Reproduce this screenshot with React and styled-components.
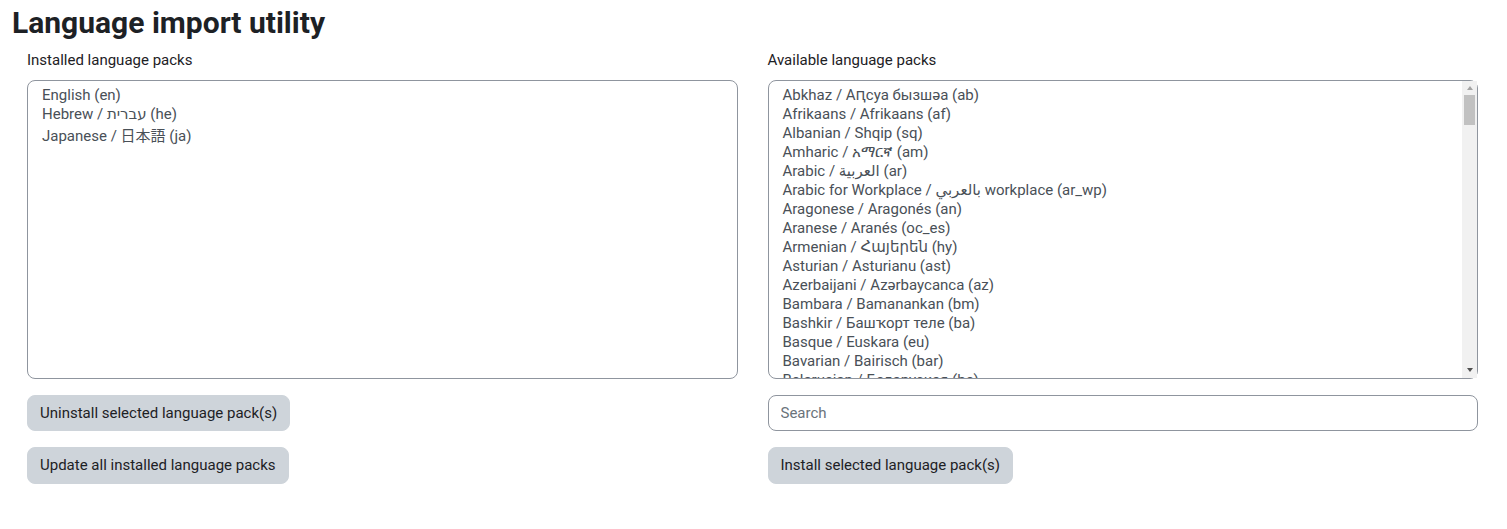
import React from 'react'
import styled, { createGlobalStyle } from 'styled-components';

const GlobalStyle = createGlobalStyle`
    body{
        margin: 0;
        background: #fff;
        font-family: Roboto, 'Liberation Sans', 'Noto Sans CJK JP', sans-serif;
        color: #1d2125;
    }
`;

const Page = styled.div`
    padding: 5px 14px 0 12px;
`;

const Heading = styled.h2`
    font-size: 30px;
    font-weight: 700;
    line-height: 1.2;
    margin: 0 0 8px;
    color: #1d2125;
`;

const Columns = styled.div`
    display: grid;
    grid-template-columns: 1fr 1fr;
`;

const Column = styled.div`
    padding: 0 15px;
    display: flex;
    flex-direction: column;
    align-items: flex-start;
`;

const Label = styled.label`
    font-size: 15px;
    line-height: 22.5px;
    margin-bottom: 8px;
`;

const ListWrap = styled.div`
    position: relative;
    width: 100%;
    margin-bottom: 16px;
`;

const ListBox = styled.select`
    display: block;
    width: 100%;
    height: 299px;
    box-sizing: border-box;
    border: 1px solid #8f959e;
    border-radius: 8px;
    padding: 5px 12px 6px;
    margin: 0;
    font-family: Roboto, 'Noto Sans CJK JP', 'DejaVu Sans', sans-serif;
    font-size: 15px;
    color: #495057;
    background: #fff;
    outline: none;
    overflow: hidden;
    option{
        padding: 0 2px 1px;
        color: #495057;
    }
`;

const ScrollTrack = styled.div`
    position: absolute;
    top: 1px;
    right: 1px;
    bottom: 1px;
    width: 15px;
    background: #f1f1f1;
    display: flex;
    flex-direction: column;
    align-items: center;
`;

const ScrollArrow = styled.div`
    height: 15px;
    width: 15px;
    flex: none;
    display: flex;
    align-items: center;
    justify-content: center;
    margin-top: ${p => (p.$down ? 'auto' : '0')};
    &::after{
        content: '';
        border-left: 3.5px solid transparent;
        border-right: 3.5px solid transparent;
        ${p => (p.$down
            ? 'border-top: 4px solid #505050;'
            : 'border-bottom: 4px solid #a3a3a3;')}
    }
`;

const ScrollThumb = styled.div`
    width: 11px;
    height: 30px;
    margin-top: -1px;
    background: #c1c1c1;
    flex: none;
`;

const Button = styled.button`
    font-family: Roboto, 'Liberation Sans', sans-serif;
    font-size: 15px;
    line-height: 1.5;
    padding: 6px 12px;
    border: 1px solid #ced4da;
    border-radius: 8px;
    background: #ced4da;
    color: #1d2125;
    margin-bottom: 16px;
    cursor: pointer;
`;

const SearchInput = styled.input`
    width: 100%;
    box-sizing: border-box;
    font-family: Roboto, 'Liberation Sans', sans-serif;
    font-size: 15px;
    line-height: 1.5;
    padding: 6px 12px;
    border: 1px solid #8f959e;
    border-radius: 8px;
    color: #495057;
    margin: 0 0 16px;
    outline: none;
    &::placeholder{
        color: #6a737b;
    }
`;

const installed = [
    ['en', 'English (en)'],
    ['he', 'Hebrew / עברית (he)'],
    ['ja', 'Japanese / 日本語 (ja)'],
];

const available = [
    ['ab', 'Abkhaz / Аԥсуа бызшәа'],
    ['af', 'Afrikaans / Afrikaans'],
    ['sq', 'Albanian / Shqip'],
    ['am', 'Amharic / አማርኛ'],
    ['ar', 'Arabic / العربية'],
    ['ar_wp', 'Arabic for Workplace / بالعربي workplace'],
    ['an', 'Aragonese / Aragonés'],
    ['oc_es', 'Aranese / Aranés'],
    ['hy', 'Armenian / Հայերեն'],
    ['ast', 'Asturian / Asturianu'],
    ['az', 'Azerbaijani / Azərbaycanca'],
    ['bm', 'Bambara / Bamanankan'],
    ['ba', 'Bashkir / Башҡорт теле'],
    ['eu', 'Basque / Euskara'],
    ['bar', 'Bavarian / Bairisch'],
    ['be', 'Belarusian / Беларуская'],
    ['bn', 'Bengali / বাংলা'],
    ['bs', 'Bosnian / Bosanski'],
    ['br', 'Breton / Brezhoneg'],
    ['bg', 'Bulgarian / Български'],
    ['ca', 'Catalan / Català'],
    ['ca_valencia', 'Catalan (Valencian) / Català (Valencià)'],
    ['ca_wp', 'Catalan for Workplace / Català per a Workplace'],
    ['zh_cn', 'Chinese (simplified) / 简体中文'],
    ['zh_tw', 'Chinese (traditional/big5) / 正體中文'],
    ['hr', 'Croatian / Hrvatski'],
    ['cs', 'Czech / Čeština'],
    ['da', 'Danish / Dansk'],
    ['da_kursus', 'Danish (kursus) / Dansk (kursus)'],
    ['da_rum', 'Danish (Roskilde University) / Dansk Rum'],
    ['prs', 'Dari / دری'],
    ['nl', 'Dutch / Nederlands'],
    ['nl_wp', 'Dutch for Workplace / Nederlands Workplace'],
    ['en_ar', 'English - Pirate / English - Pirate'],
    ['en_kids', 'English for kids / English for kids'],
    ['en_us', 'English - United States / English - United States'],
    ['en_us_k12', 'English (US) K12 / English (US) K12'],
    ['en_wp', 'English for Workplace / English for Workplace'],
    ['eo', 'Esperanto / Esperanto'],
    ['et', 'Estonian / eesti'],
    ['fo', 'Faroese / Føroyskt'],
    ['fil', 'Filipino / Filipino'],
    ['fi', 'Finnish / Suomi'],
    ['fr', 'French / Français'],
    ['fr_ca', 'French - Canada / Français - Canada'],
    ['fr_wp', 'French for Workplace / Français Workplace'],
    ['fy', 'Frisian / Frysk'],
    ['gl', 'Galician / Galego'],
    ['ka', 'Georgian / ქართული'],
    ['de', 'German / Deutsch'],
    ['de_du', 'German (personal) / Deutsch - Du'],
    ['de_kids', 'German for Kids / Deutsch für Kinder'],
    ['de_ch', 'German - Switzerland / Deutsch - Schweiz'],
    ['de_comm', 'German community / Deutsch - Community'],
    ['de_wp', 'German for Workplace / Deutsch Workplace'],
    ['el', 'Greek / Ελληνικά'],
    ['kl', 'Greenlandic / Kalaallisut'],
    ['gn', 'Guarani / Avañe\'ẽ'],
    ['gu', 'Gujarati / ગુજરાતી'],
    ['ht', 'Haitian Creole / Kreyòl Ayisyen'],
    ['ha', 'Hausa / Hausa'],
    ['haw', 'Hawaiian / ʻŌlelo Hawaiʻi'],
    ['he_wp', 'Hebrew for Workplace / עברית בעבודה'],
    ['hi', 'Hindi / हिंदी'],
    ['hu', 'Hungarian / magyar'],
    ['is', 'Icelandic / Íslenska'],
    ['ig', 'Igbo / Igbo'],
    ['id', 'Indonesian / Indonesian'],
    ['ga', 'Irish / Gaeilge'],
    ['it', 'Italian / Italiano'],
    ['it_wp', 'Italian for Workplace / Italiano Workplace'],
    ['ja_kids', 'Japanese for kids / 日本語 子供向け'],
    ['kn', 'Kannada / ಕನ್ನಡ'],
    ['kk', 'Kazakh / Қазақша'],
    ['km', 'Khmer / ខ្មែរ'],
    ['rw', 'Kinyarwanda / Kinyarwanda'],
    ['ky', 'Kyrgyz / Кыргызча'],
    ['ko', 'Korean / 한국어'],
    ['ku', 'Kurdish / Kurdî'],
    ['lo', 'Lao / ລາວ'],
    ['la', 'Latin / Latin'],
    ['lv', 'Latvian / Latviešu'],
    ['lt', 'Lithuanian / Lietuvių'],
    ['lb', 'Luxembourgish / Lëtzebuergesch'],
    ['mk', 'Macedonian / Македонски'],
    ['mg', 'Malagasy / Malagasy'],
    ['ms', 'Malay / Bahasa Melayu'],
    ['ml', 'Malayalam / മലയാളം'],
    ['mt', 'Maltese / Malti'],
    ['mi', 'Maori / Te Reo Māori'],
    ['mr', 'Marathi / मराठी'],
    ['mn', 'Mongolian / Монгол'],
    ['ne', 'Nepali / नेपाली'],
    ['no', 'Norwegian / Norsk - bokmål'],
    ['nn', 'Norwegian Nynorsk / Norsk - nynorsk'],
    ['oc', 'Occitan / Occitan'],
    ['or', 'Odia / ଓଡ଼ିଆ'],
    ['ps', 'Pashto / پښتو'],
    ['fa', 'Persian / فارسی'],
    ['pl', 'Polish / Polski'],
    ['pt', 'Portuguese - Portugal / Português - Portugal'],
    ['pt_br', 'Portuguese - Brazil / Português - Brasil'],
    ['pa', 'Punjabi / ਪੰਜਾਬੀ'],
    ['ro', 'Romanian / Română'],
    ['ru', 'Russian / Русский'],
    ['sm', 'Samoan / Gagana Samoa'],
    ['sa', 'Sanskrit / संस्कृत'],
    ['gd', 'Scottish Gaelic / Gàidhlig'],
    ['sr_cr', 'Serbian Cyrillic / Српски'],
    ['sr_lt', 'Serbian Latin / Srpski'],
    ['si', 'Sinhala / සිංහල'],
    ['sk', 'Slovak / Slovenčina'],
    ['sl', 'Slovenian / Slovenščina'],
    ['so', 'Somali / Soomaali'],
    ['es', 'Spanish - International / Español - Internacional'],
    ['es_mx', 'Spanish - Mexico / Español - México'],
    ['sw', 'Swahili / Kiswahili'],
    ['sv', 'Swedish / Svenska'],
    ['tl', 'Tagalog / Tagalog'],
    ['ta', 'Tamil / தமிழ்'],
    ['tt', 'Tatar / Татар'],
    ['te', 'Telugu / తెలుగు'],
    ['th', 'Thai / ไทย'],
    ['bo', 'Tibetan / བོད་སྐད'],
    ['to', 'Tongan / Lea Faka-Tonga'],
    ['tr', 'Turkish / Türkçe'],
    ['tk', 'Turkmen / Türkmen'],
    ['ug', 'Uyghur / ئۇيغۇرچە'],
    ['uk', 'Ukrainian / Українська'],
    ['ur', 'Urdu / اردو'],
    ['uz', 'Uzbek / O\'zbekcha'],
    ['vi', 'Vietnamese / Tiếng Việt'],
    ['cy', 'Welsh / Cymraeg'],
    ['wo', 'Wolof / Wolof'],
    ['xh', 'Xhosa / isiXhosa'],
    ['yi', 'Yiddish / ייִדיש'],
    ['yo', 'Yoruba / Yorùbá'],
    ['zu', 'Zulu / isiZulu'],
];

const App = () => {
    return(
        <Page>
            <GlobalStyle />
            <Heading>Language import utility</Heading>
            <Columns>
                <Column>
                    <Label htmlFor="uninstalllang">Installed language packs</Label>
                    <ListWrap>
                        <ListBox id="uninstalllang" multiple>
                            {installed.map(([code, name]) => (
                                <option key={code} value={code}>{name}</option>
                            ))}
                        </ListBox>
                    </ListWrap>
                    <Button>Uninstall selected language pack(s)</Button>
                    <Button>Update all installed language packs</Button>
                </Column>
                <Column>
                    <Label htmlFor="pack">Available language packs</Label>
                    <ListWrap>
                        <ListBox id="pack" multiple>
                            {available.map(([code, name]) => (
                                <option key={code} value={code}>{`${name} (${code})`}</option>
                            ))}
                        </ListBox>
                        <ScrollTrack>
                            <ScrollArrow />
                            <ScrollThumb />
                            <ScrollArrow $down />
                        </ScrollTrack>
                    </ListWrap>
                    <SearchInput type="text" placeholder="Search" />
                    <Button>Install selected language pack(s)</Button>
                </Column>
            </Columns>
        </Page>
    )
}

export default App;
